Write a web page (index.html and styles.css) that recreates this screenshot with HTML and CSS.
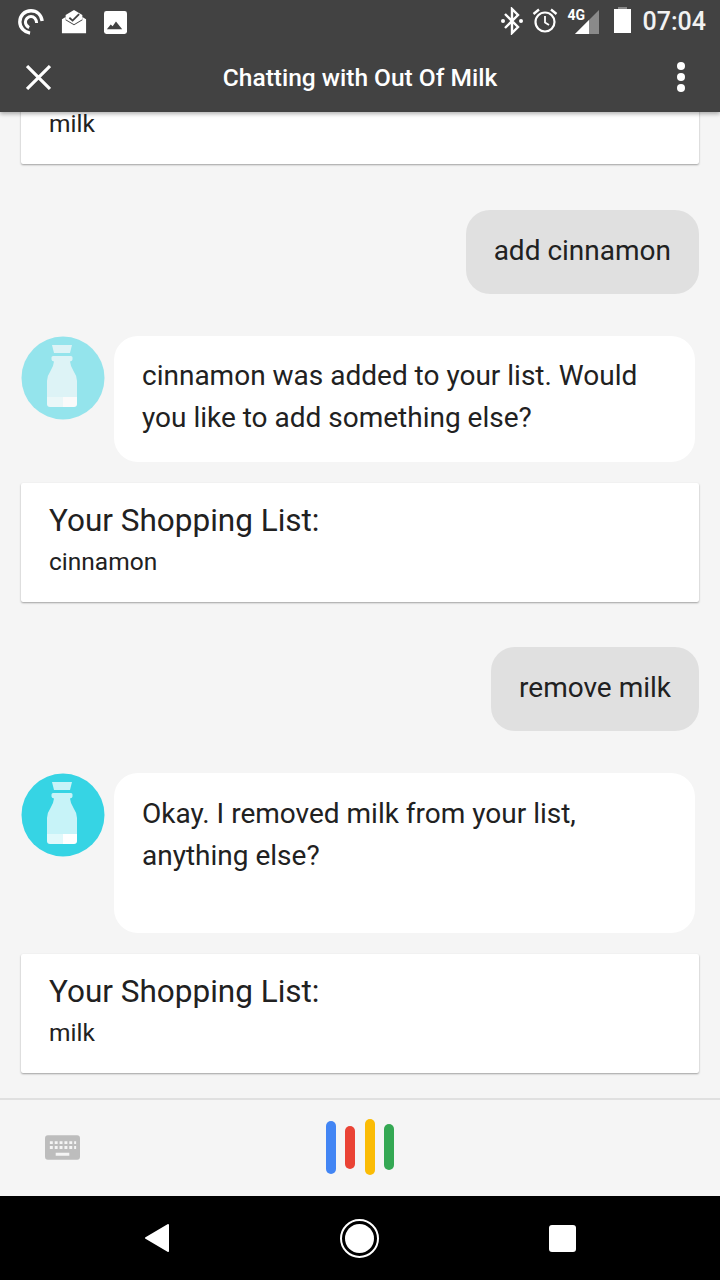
FILE: index.html
```html
<!DOCTYPE html>
<html lang="en">
<head>
  <meta charset="UTF-8">
  <title>Chatting with Out Of Milk</title>
  <link rel="stylesheet" href="styles.css">
</head>
<body>
  <div class="phone">
    <header class="top">
      <div class="status">
        <div class="status-left">
          <svg class="ic-pocket" width="28" height="28" viewBox="0 0 30 30"><path d="M27 14C26 7 21 3 15 3 8 3 3 8 3 15c0 6 5 11 11 12" fill="none" stroke="#fff" stroke-width="3.6"/><path d="M21 16c0-4-3-7-6-7s-6 3-6 6c0 3 2 5 4 6" fill="none" stroke="#fff" stroke-width="3.2"/></svg>
          <svg class="ic-mail" width="26" height="26" viewBox="0 0 28 28"><path d="M1 11 5 8.500V12l9 5.500L23 12V8.500L27 11v15H1z" fill="#fff"/><path d="M14 1 23 6.500V11l-9 5.500L5 11V6.500z" fill="#fff"/><path d="M9 9.500l3.500 3 7-7" fill="none" stroke="#424242" stroke-width="2"/></svg>
          <svg class="ic-image" width="23" height="23" viewBox="0 0 24 24"><rect width="24" height="24" rx="2.500" fill="#fff"/><path d="M3 19l4-5 2 2 3.500-5 6.500 8z" fill="#424242"/></svg>
        </div>
        <div class="status-right">
          <svg class="ic-bt" width="24" height="28" viewBox="0 0 24 28"><path d="M5 7l13 13-6 6V2l6 6L5 21" fill="none" stroke="#fff" stroke-width="2.400"/><circle cx="3" cy="14" r="2" fill="#fff"/><circle cx="21" cy="14" r="2" fill="#fff"/></svg>
          <svg class="ic-alarm" width="26" height="26" viewBox="0 0 26 26"><circle cx="13" cy="14" r="9.500" fill="none" stroke="#fff" stroke-width="2.200"/><path d="M13 8v6.500l4 2.500" fill="none" stroke="#fff" stroke-width="1.800"/><path d="M1.500 6 7 1.500M24.500 6 19 1.500" stroke="#fff" stroke-width="2.400"/></svg>
          <div class="signal">
            <span class="net">4G</span>
            <svg width="24" height="24" viewBox="0 0 24 24"><path d="M24 0V24H0z" fill="#8a8a8a"/><path d="M14 10V24H0z" fill="#fff"/></svg>
          </div>
          <div class="battery"></div>
          <span class="clock">07:04</span>
        </div>
      </div>
      <div class="toolbar">
        <svg class="ic-close" width="25" height="25" viewBox="0 0 24 24"><path d="M1 1l22 22M23 1 1 23" stroke="#fff" stroke-width="3"/></svg>
        <h1>Chatting with Out Of Milk</h1>
        <div class="dots"><i></i><i></i><i></i></div>
      </div>
    </header>

    <main class="feed">
      <section class="card clipped">
        <p>milk</p>
      </section>

      <div class="user-msg">add cinnamon</div>

      <div class="bot-row">
        <svg class="avatar faded" width="84" height="84" viewBox="0 0 84 84"><use href="#bottle"/></svg>
        <div class="bot-msg">cinnamon was added to your list. Would you like to add something else?</div>
      </div>

      <section class="card">
        <h2>Your Shopping List:</h2>
        <p>cinnamon</p>
      </section>

      <div class="user-msg">remove milk</div>

      <div class="bot-row">
        <svg class="avatar" width="84" height="84" viewBox="0 0 84 84">
          <defs>
            <g id="bottle">
              <circle cx="42" cy="42" r="41.500" fill="#36d4e4"/>
              <path d="M31 9h20l-2 8H33z" fill="#fff" opacity=".72"/>
              <path d="M32 20h18q1.500 0 1.500 1.500v2q0 1.500-2.500 2 .5 5 3.500 9.500 3.500 5 3.500 10V61H26V45q0-5 3.500-10 3-4.500 3.500-9.500-2.500-.5-2.500-2v-2Q30.500 20 32 20z" fill="#fff" opacity=".72"/>
              <path d="M26 61h16v10H29q-3 0-3-3z" fill="#fff" opacity=".85"/>
              <path d="M42 61h14v7q0 3-3 3H42z" fill="#fff"/>
            </g>
          </defs>
          <use href="#bottle"/>
        </svg>
        <div class="bot-msg tall">Okay. I removed milk from your list, anything else?</div>
      </div>

      <section class="card">
        <h2>Your Shopping List:</h2>
        <p>milk</p>
      </section>
    </main>

    <footer class="input-bar">
      <svg class="ic-keyboard" width="35" height="25" viewBox="0 0 36 25">
        <rect width="36" height="25" rx="3" fill="#bdbdbd"/>
        <path d="M5 6h3v3H5zM10 6h3v3h-3zM15 6h3v3h-3zM20 6h3v3h-3zM25 6h3v3h-3zM30 6h2v3h-2zM5 11h3v3H5zM10 11h3v3h-3zM15 11h3v3h-3zM20 11h3v3h-3zM25 11h3v3h-3zM30 11h2v3h-2zM11 18h14v3H11z" fill="#f5f5f5"/>
      </svg>
      <div class="mic">
        <i class="bar-blue"></i>
        <i class="bar-red"></i>
        <i class="bar-yellow"></i>
        <i class="bar-green"></i>
      </div>
    </footer>

    <nav class="navbar">
      <svg width="26" height="30" viewBox="0 0 26 30"><path d="M24 2 2 15l22 13z" fill="#fff" stroke="#fff" stroke-width="2" stroke-linejoin="round"/></svg>
      <div class="home"><span></span></div>
      <div class="recent"></div>
    </nav>
  </div>
</body>
</html>
```

FILE: styles.css
```css
* {
  margin: 0;
  padding: 0;
  box-sizing: border-box;
}

body {
  font-family: Roboto, "Liberation Sans", sans-serif;
  background-color: #f5f5f5;
  color: #212121;
}

.phone {
  width: 720px;
  height: 1280px;
  display: flex;
  flex-direction: column;
  overflow: hidden;
}

/* Header */
.top {
  height: 112px;
  flex: none;
  background-color: #424242;
  color: #fff;
  box-shadow: 0 2px 4px rgba(0, 0, 0, 0.3);
  position: relative;
  z-index: 2;
}

.status {
  height: 44px;
  display: flex;
  justify-content: space-between;
  align-items: center;
  padding: 0 14px 0 17px;
}

.status-left,
.status-right {
  display: flex;
  align-items: center;
}

.status-left {
  gap: 16px;
}

.ic-image {
  margin-left: 1px;
}

.status-right {
  margin-top: -2px;
}

.ic-alarm {
  margin-left: 8px;
}

.signal {
  position: relative;
  width: 31px;
  height: 26px;
  margin-left: 10px;
  display: flex;
  justify-content: flex-end;
  align-items: flex-end;
}

.net {
  position: absolute;
  left: 0;
  top: 0;
  font-size: 14px;
  line-height: 14px;
  font-weight: 700;
}

.battery {
  width: 17px;
  height: 24px;
  margin-left: 15px;
  background-color: #fff;
  position: relative;
}

.battery::before {
  content: "";
  position: absolute;
  top: -2px;
  left: 4px;
  width: 9px;
  height: 2px;
  background-color: #8a8a8a;
}

.clock {
  margin-left: 12px;
  font-size: 25px;
  font-weight: 500;
  color: #f2f2f2;
}

.toolbar {
  height: 68px;
  display: grid;
  grid-template-columns: 1fr auto 1fr;
  align-items: center;
  padding: 0 26px 2px;
}

h1 {
  font-size: 24.5px;
  font-weight: 500;
  color: #fff;
}

.dots {
  justify-self: end;
  margin-right: 9px;
  display: flex;
  flex-direction: column;
  gap: 3px;
}

.dots i {
  width: 8px;
  height: 8px;
  border-radius: 50%;
  background-color: #fff;
}

/* Conversation */
.feed {
  flex: 1;
  min-height: 0;
  display: flex;
  flex-direction: column;
  justify-content: flex-end;
  padding: 0 21px 25px;
  overflow: hidden;
}

.card {
  flex: none;
  height: 119px;
  padding: 19px 28px 0;
  background-color: #fff;
  border-radius: 2px;
  box-shadow: 0 1px 2px rgba(0, 0, 0, 0.35);
  margin-top: 21px;
}

.card.clipped {
  height: 62px;
  padding-top: 0;
  margin-bottom: 1px;
}

.card h2 {
  font-size: 31.5px;
  font-weight: 400;
  line-height: 38px;
}

.card p {
  font-size: 24.5px;
  line-height: 44px;
}

.user-msg {
  flex: none;
  align-self: flex-end;
  height: 84px;
  margin-top: 45px;
  padding: 0 28px;
  background-color: #e0e0e0;
  border-radius: 24px;
  font-size: 28px;
  line-height: 81px;
}

.bot-row {
  flex: none;
  display: flex;
  align-items: flex-start;
  gap: 9px;
  margin-top: 42px;
}

.avatar {
  flex: none;
}

.avatar.faded {
  opacity: 0.5;
}

.bot-msg {
  width: 581px;
  padding: 19px 28px 23px;
  background-color: #fff;
  border-radius: 24px;
  font-size: 28px;
  line-height: 42px;
}

.bot-msg.tall {
  height: 160px;
  padding-top: 20px;
}

/* Input bar */
.input-bar {
  flex: none;
  height: 98px;
  border-top: 2px solid #e0e0e0;
  display: grid;
  grid-template-columns: 1fr auto 1fr;
  align-items: center;
  padding: 0 45px 2px;
}

.mic {
  display: flex;
  align-items: center;
  gap: 9.5px;
}

.mic i {
  width: 10px;
  border-radius: 5px;
}

.bar-blue {
  height: 53px;
  background-color: #4285f4;
}

.bar-red {
  height: 43px;
  background-color: #ea4335;
}

.bar-yellow {
  height: 56px;
  background-color: #fbbc05;
}

.bar-green {
  height: 46px;
  background-color: #34a853;
}

/* Android nav */
.navbar {
  flex: none;
  height: 84px;
  background-color: #000;
  display: flex;
  justify-content: space-between;
  align-items: center;
  padding: 0 144px;
}

.home {
  width: 39px;
  height: 39px;
  border: 2px solid #fff;
  border-radius: 50%;
  padding: 3px;
}

.home span {
  display: block;
  width: 100%;
  height: 100%;
  border-radius: 50%;
  background-color: #fff;
}

.recent {
  width: 27px;
  height: 27px;
  border-radius: 3px;
  background-color: #fff;
}
```
